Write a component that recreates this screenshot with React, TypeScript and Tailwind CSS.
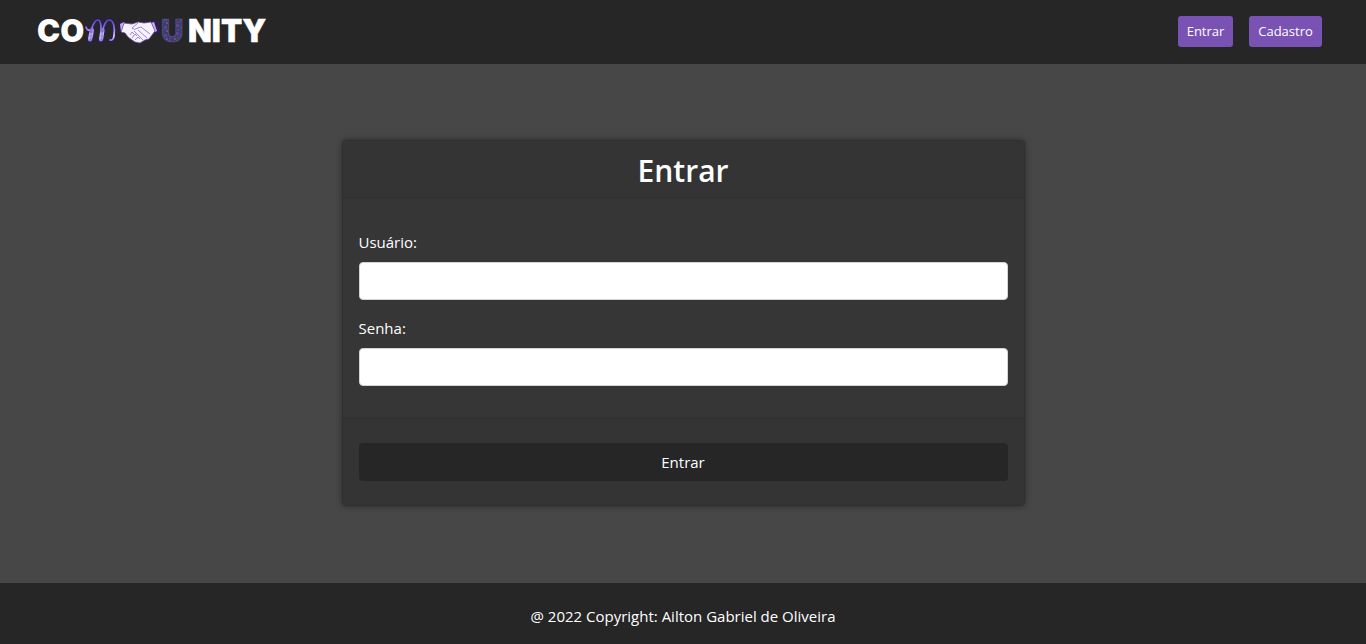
import React from "react";

function Logo() {
  return (
    <svg width="240" height="44" viewBox="36 9 240 44" role="img" aria-label="Community">
      <defs>
        <linearGradient id="ribbon" gradientUnits="userSpaceOnUse" x1="0" y1="19" x2="0" y2="42">
          <stop offset="0" stopColor="#5a45a8" />
          <stop offset="0.4" stopColor="#8b78cc" />
          <stop offset="0.75" stopColor="#d9d2f4" />
          <stop offset="1" stopColor="#7a62c4" />
        </linearGradient>
        <pattern id="mosaic" width="8" height="8" patternUnits="userSpaceOnUse">
          <rect width="8" height="8" fill="#43396f" />
          <rect width="3" height="3" fill="#5d4488" />
          <rect x="4" y="2" width="3" height="3" fill="#3d5290" />
          <rect x="1" y="5" width="3" height="2" fill="#345080" />
          <rect x="6" y="6" width="2" height="2" fill="#6d4f88" />
        </pattern>
      </defs>
      <g className="font-['Inter',sans-serif] text-[31px] leading-9 font-black">
        <text x="37" y="42" fill="#fff">CO</text>
        <text x="161" y="42" fill="url(#mosaic)" stroke="#66518d" strokeWidth="0.6">U</text>
        <text x="188" y="42" fill="#fff" stroke="#fff" strokeWidth="0.4">NITY</text>
      </g>
      <g fill="none" strokeLinecap="round" strokeLinejoin="round">
        <path
          d="M86 27 Q87 32 91 30 M90 40 C90 30 94 20 98 20 C102 20 101 32 101 40 C102 30 105 20 109 20 C114 20 115 28 114 36 Q113 41 110 40"
          stroke="#2a1a66"
          strokeWidth="3.4"
        />
        <path d="M90 40 L92 31 M101 40 L102.5 31" stroke="#2a1a66" strokeWidth="6" />
        <path
          d="M86 27 Q87 31 91 30 M90 40 C90 30 94 20 98 20 C102 20 101 32 101 40 C102 30 105 20 109 20 C114 20 115 28 114 36 Q113 41 110 40"
          stroke="url(#ribbon)"
          strokeWidth="1.7"
        />
        <path d="M90 39.5 L92 30 M101 39.5 L102.5 30" stroke="url(#ribbon)" strokeWidth="4.2" />
        <path d="M88 36 H93 M89 32 H94 M99 36 H104 M100 31 H105 M91 29 V40 M102 28 V40" stroke="#6a52b8" strokeWidth="0.6" />
      </g>
      <g strokeLinejoin="round">
        <path d="M118 24 L122 20 L127 31 L121 34 Z" fill="#30165f" />
        <path d="M150 22 L156 20 L160 32 L154 34 Z" fill="#351669" />
        <path d="M120 24 L124 22 L127 30 L121 32 Z M151 23 L154 22 L157 31 L155 32 Z" fill="#c8b0e7" />
        <path
          d="M124 23 L132 24 L138 22 L144 23 L151 22 L155 31 L152 35 L149 39 L145 40 L140 43 L135 42 L132 40 L128 37 L125 33 L121 32 Z"
          fill="#f7f1ff"
          stroke="#6947a2"
          strokeWidth="0.8"
        />
        <path
          d="M138 23 L132 28 Q134 31 138 28 L141 27 L150 34 M138 30 L147 38 M134 31 L143 40 M130 35 L132 32 L134 34 M132 38 L135 34 L137 36 M135 40 L138 37 L140 39"
          fill="none"
          stroke="#8a70ba"
          strokeWidth="0.8"
        />
      </g>
    </svg>
  );
}

const navLink = "flex h-[31px] items-center justify-center rounded-[3px] bg-[#7952b3] text-[13px] text-white hover:bg-[#6b46a3]";
const field = "block h-[38px] w-full rounded border border-[#ced4da] bg-white px-3 text-[#212529]";

export default function App() {
  return (
    <div className="flex min-h-screen flex-col bg-[#474747] font-['Open_Sans','Noto_Sans',sans-serif] text-[15px] leading-6 text-white">
      <header className="flex h-16 items-center justify-between bg-[#262626] pr-11 pb-0.5 pl-9">
        <a href="#"><Logo /></a>
        <nav className="flex gap-4">
          <a href="#entrar" className={`${navLink} w-[55px]`}>Entrar</a>
          <a href="#cadastro" className={`${navLink} w-[73px]`}>Cadastro</a>
        </nav>
      </header>
      <main className="flex flex-1 items-center justify-center pt-8 pb-[34px]">
        <form className="w-1/2 rounded border border-[#303030] bg-[#363636] shadow-[0_0_6px_rgba(0,0,0,0.4)]" onSubmit={(e) => e.preventDefault()}>
          <div className="border-b border-[#2f2f2f] bg-[#343434] pt-2.5 pb-1.5">
            <h1 className="text-center text-[30px] leading-10 font-semibold">Entrar</h1>
          </div>
          <div className="px-4 py-8">
            <label htmlFor="user" className="mb-2 block">Usuário:</label>
            <input id="user" type="text" className={`${field} mb-4`} />
            <label htmlFor="password" className="mb-2 block">Senha:</label>
            <input id="password" type="password" className={field} />
          </div>
          <div className="border-t border-[#2f2f2f] bg-[#343434] px-4 py-6">
            <button type="submit" className="h-[38px] w-full rounded bg-[#262626] hover:bg-[#202020]">Entrar</button>
          </div>
        </form>
      </main>
      <footer className="flex h-[61px] items-center justify-center bg-[#262626] pt-1">
        <p>@ 2022 Copyright: Ailton Gabriel de Oliveira</p>
      </footer>
    </div>
  );
}
